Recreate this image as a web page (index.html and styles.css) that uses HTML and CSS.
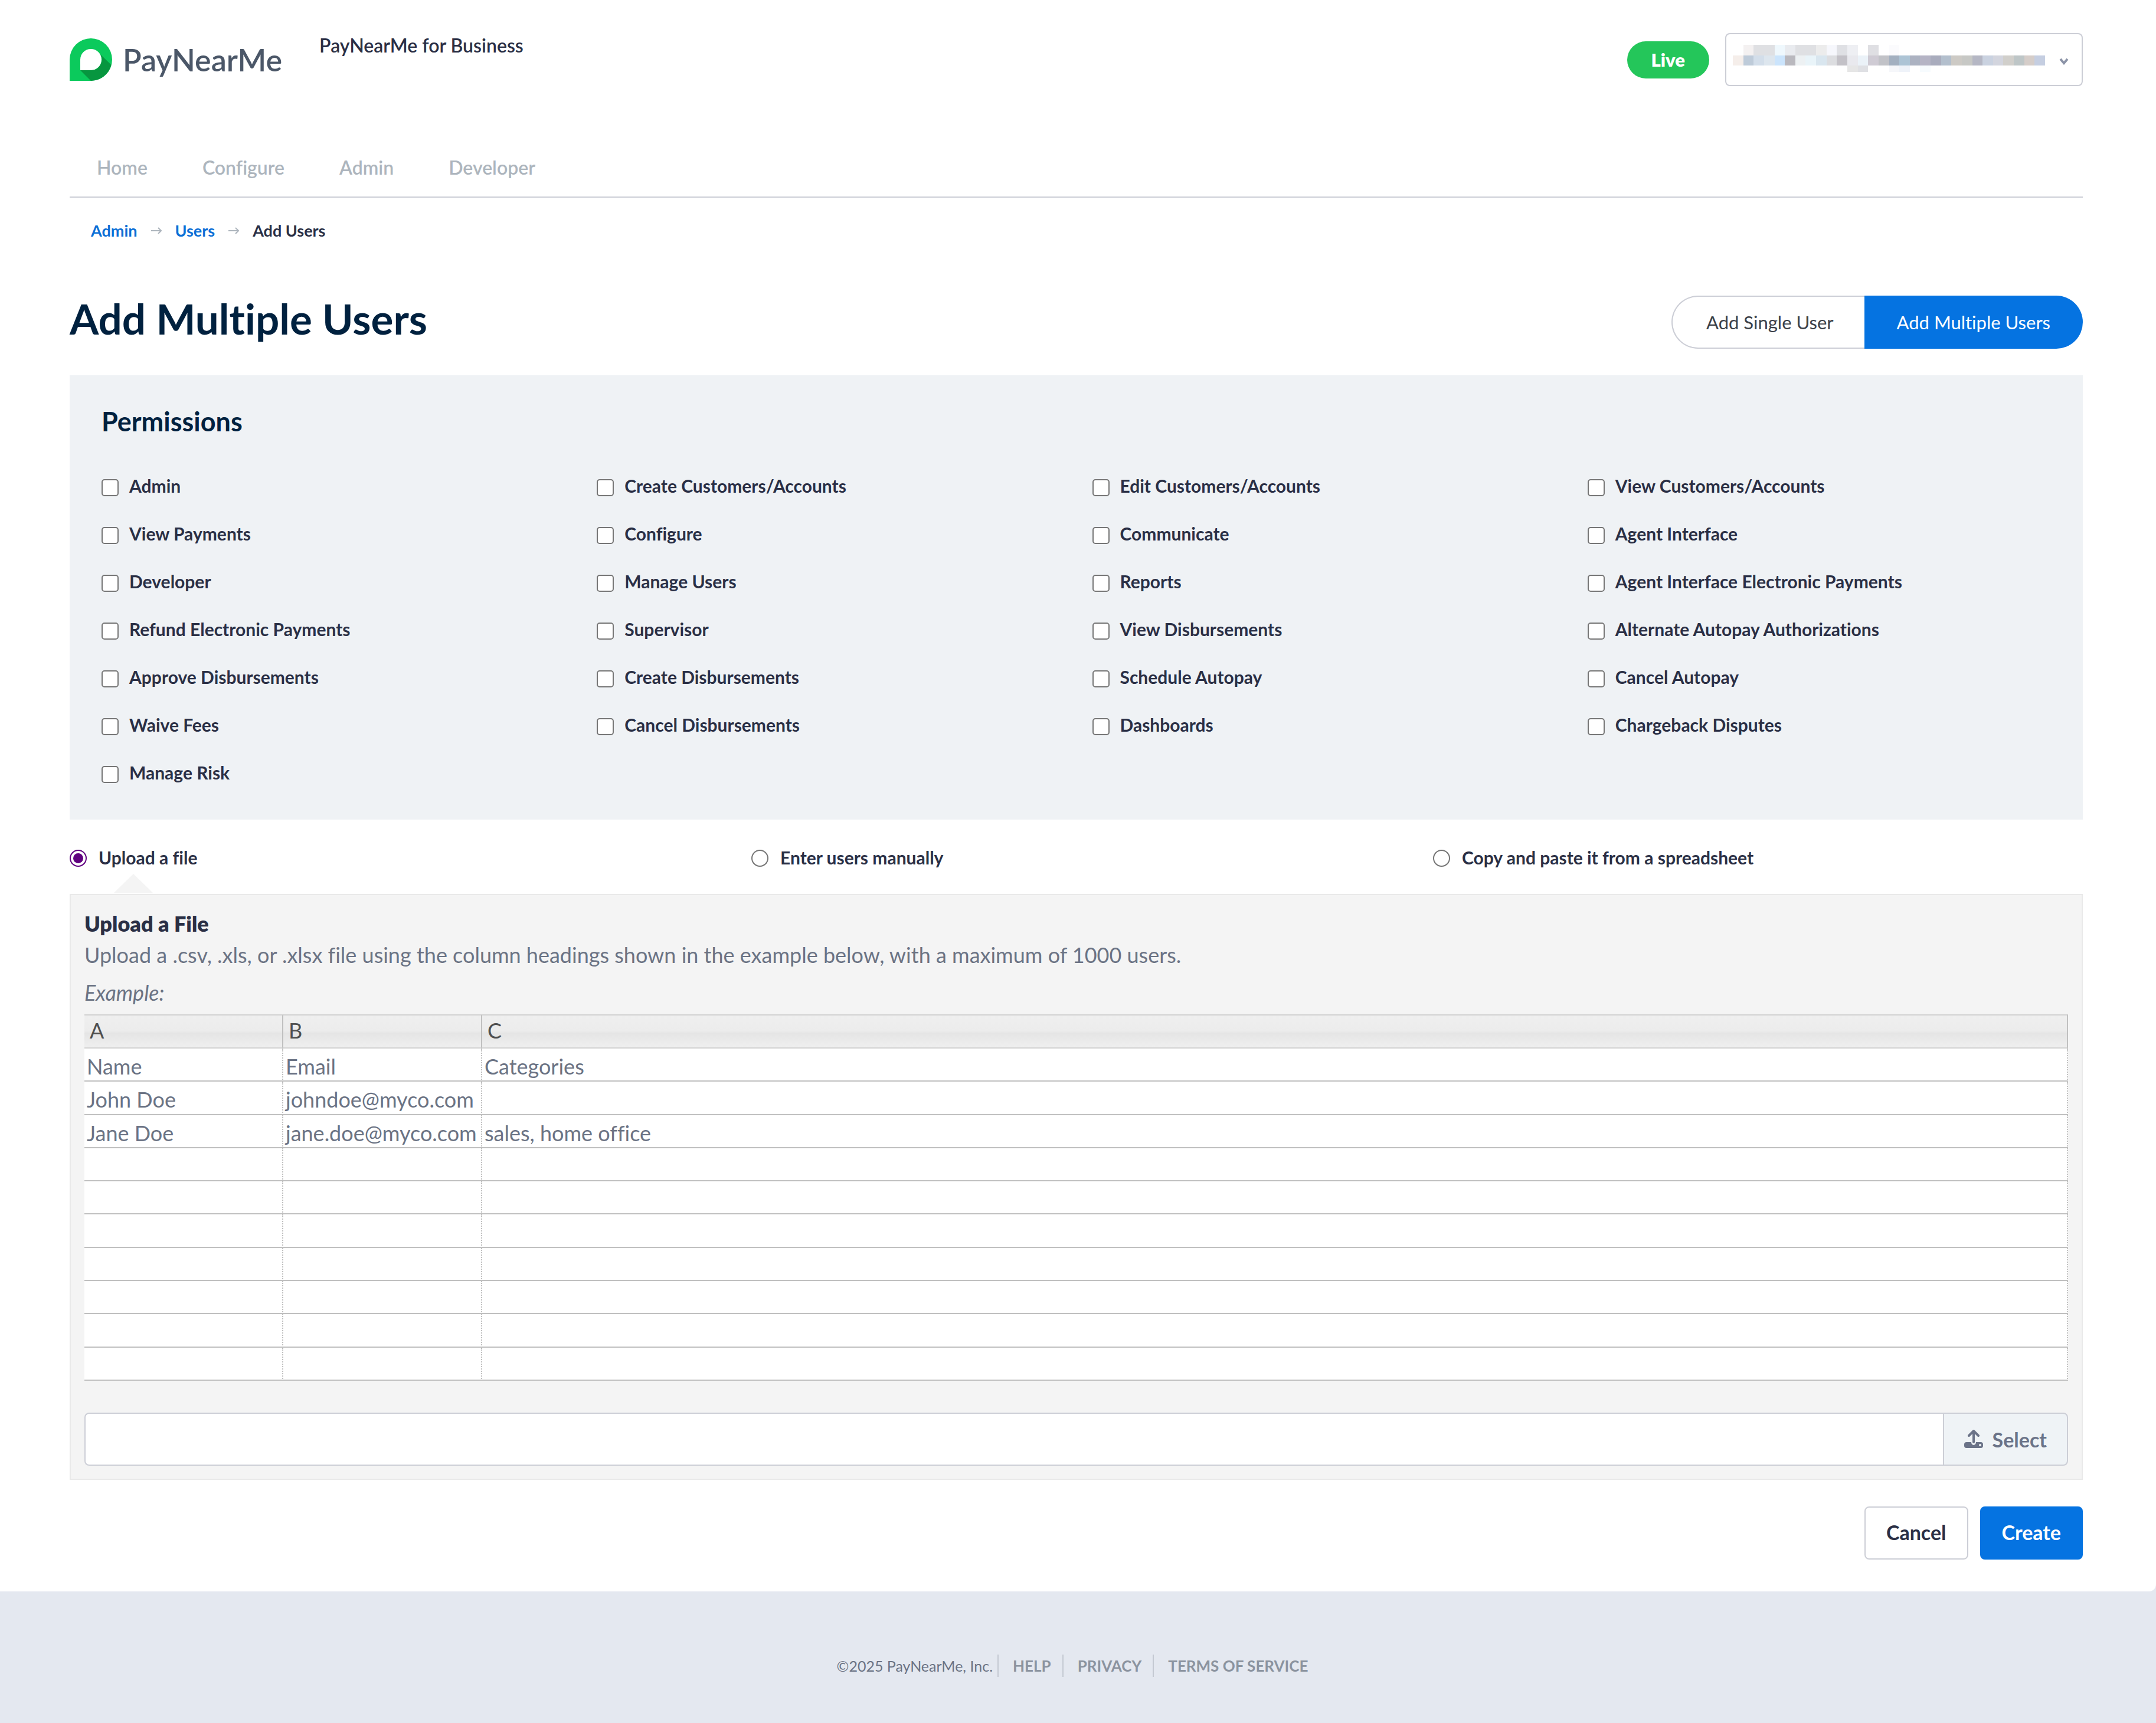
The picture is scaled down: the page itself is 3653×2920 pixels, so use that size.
FILE: index.html
```html
<!DOCTYPE html>
<html lang="en">
<head>
<meta charset="utf-8">
<meta name="viewport" content="width=device-width, initial-scale=1">
<title>Add Multiple Users - PayNearMe for Business</title>
<link rel="stylesheet" href="styles.css">
</head>
<body>
<div class="page">
  <header class="header">
    <a class="logo" href="#">
      <svg class="logo-mark" viewBox="0 0 72 72" aria-hidden="true">
        <path fill="#0bca5c" fill-rule="evenodd" d="M0 72V36a36 36 0 1 1 36 36ZM18 54h18a18 18 0 1 0-18-18Z"/>
        <path fill="#07963f" d="M52 27 70.500 45A36 36 0 0 1 36 72L18 54H36A18 18 0 0 0 52 27Z"/>
      </svg>
      <span class="logo-text">PayNearMe</span>
    </a>
    <p class="product">PayNearMe for Business</p>
    <div class="account">
      <span class="live">Live</span>
      <div class="picker">
        <select class="picker-select" aria-label="Account"><option></option></select>
        <svg class="picker-value" viewBox="0 0 300 46" preserveAspectRatio="none" shape-rendering="crispEdges" aria-hidden="true">
          <g>
            <path fill="#f4f1f1" d="M10 0h10v18h-10z"/><path fill="#dfe0e3" d="M20 0h20v18h-20z"/><path fill="#eff8fd" d="M40 0h10v18h-10z"/><path fill="#e9ebef" d="M50 0h10v18h-10z"/><path fill="#dfe0e3" d="M60 0h20v18h-20z"/><path fill="#ececec" d="M80 0h10v18h-10z"/><path fill="#f6f7fc" d="M90 0h10v18h-10z"/><path fill="#dfe0e4" d="M100 0h10v18h-10z"/><path fill="#eeeff3" d="M110 0h10v18h-10z"/><path fill="#dfdfe3" d="M130 0h10v18h-10z"/><path fill="#fbfbfd" d="M150 0h10v18h-10z"/>
          </g>
          <g>
            <path fill="#f5eeea" d="M0 18h10v17h-10z"/><path fill="#becbd9" d="M10 18h10v17h-10z"/><path fill="#d3deea" d="M20 18h10v17h-10z"/><path fill="#dde6ee" d="M30 18h10v17h-10z"/><path fill="#cbe4fc" d="M40 18h10v17h-10z"/><path fill="#b9b8be" d="M50 18h10v17h-10z"/><path fill="#edf1f3" d="M60 18h10v17h-10z"/><path fill="#e9f4f9" d="M70 18h10v17h-10z"/><path fill="#d9e6ef" d="M80 18h10v17h-10z"/><path fill="#dcdde0" d="M90 18h10v17h-10z"/><path fill="#c3c1c7" d="M100 18h10v17h-10z"/><path fill="#e9e9ee" d="M110 18h10v17h-10z"/><path fill="#ebf2f8" d="M120 18h10v17h-10z"/><path fill="#cfcbd4" d="M130 18h10v17h-10z"/><path fill="#c1c2c7" d="M140 18h10v17h-10z"/>
            <path fill="#a3b0c0" d="M150 18h10v17h-10z"/><path fill="#adc4d5" d="M160 18h10v17h-10z"/><path fill="#acb2c1" d="M170 18h10v17h-10z"/><path fill="#b5b4c5" d="M180 18h10v17h-10z"/><path fill="#a9acbd" d="M190 18h10v17h-10z"/><path fill="#b3bfcd" d="M200 18h10v17h-10z"/><path fill="#cdcac5" d="M210 18h10v17h-10z"/><path fill="#c7c8c5" d="M220 18h10v17h-10z"/><path fill="#b5b7c4" d="M230 18h10v17h-10z"/><path fill="#cad2e0" d="M240 18h10v17h-10z"/><path fill="#d3d5de" d="M250 18h10v17h-10z"/><path fill="#d1cfcb" d="M260 18h10v17h-10z"/><path fill="#bec6c7" d="M270 18h10v17h-10z"/><path fill="#d5cdc9" d="M280 18h10v17h-10z"/><path fill="#c5cee1" d="M290 18h10v17h-10z"/>
          </g>
          <g>
            <path fill="#e6e6e6" d="M110 35h10v11h-10z"/><path fill="#dfe0e4" d="M120 35h10v11h-10z"/><path fill="#f6f7fa" d="M150 35h10v11h-10z"/><path fill="#eff3f9" d="M160 35h10v11h-10z"/><path fill="#f7fbfe" d="M180 35h10v11h-10z"/>
          </g>
        </svg>
        <svg class="picker-arrow" viewBox="0 0 16 12" aria-hidden="true"><path d="M2 2l6 7 6-7" fill="none" stroke="#8b93a7" stroke-width="4"/></svg>
      </div>
    </div>
  </header>

  <nav class="nav" aria-label="Main">
    <a href="#">Home</a>
    <a href="#">Configure</a>
    <a href="#">Admin</a>
    <a href="#">Developer</a>
  </nav>

  <nav class="crumbs" aria-label="Breadcrumb">
    <a href="#">Admin</a>
    <svg class="crumb-arrow" viewBox="0 0 18 12" aria-hidden="true"><path d="M0 6h17M12 1l5 5-5 5" fill="none" stroke="#adb5bd" stroke-width="2"/></svg>
    <a href="#">Users</a>
    <svg class="crumb-arrow" viewBox="0 0 18 12" aria-hidden="true"><path d="M0 6h17M12 1l5 5-5 5" fill="none" stroke="#adb5bd" stroke-width="2"/></svg>
    <span>Add Users</span>
  </nav>

  <main>
    <div class="title-row">
      <h1 class="title">Add Multiple Users</h1>
      <div class="toggle">
        <button class="toggle-option" type="button">Add Single User</button>
        <button class="toggle-option active" type="button">Add Multiple Users</button>
      </div>
    </div>

    <form>
      <section class="permissions">
        <h2 class="permissions-title">Permissions</h2>
        <div class="permissions-grid">
          <label class="choice"><input class="box" type="checkbox">Admin</label>
          <label class="choice"><input class="box" type="checkbox">Create Customers/Accounts</label>
          <label class="choice"><input class="box" type="checkbox">Edit Customers/Accounts</label>
          <label class="choice"><input class="box" type="checkbox">View Customers/Accounts</label>
          <label class="choice"><input class="box" type="checkbox">View Payments</label>
          <label class="choice"><input class="box" type="checkbox">Configure</label>
          <label class="choice"><input class="box" type="checkbox">Communicate</label>
          <label class="choice"><input class="box" type="checkbox">Agent Interface</label>
          <label class="choice"><input class="box" type="checkbox">Developer</label>
          <label class="choice"><input class="box" type="checkbox">Manage Users</label>
          <label class="choice"><input class="box" type="checkbox">Reports</label>
          <label class="choice"><input class="box" type="checkbox">Agent Interface Electronic Payments</label>
          <label class="choice"><input class="box" type="checkbox">Refund Electronic Payments</label>
          <label class="choice"><input class="box" type="checkbox">Supervisor</label>
          <label class="choice"><input class="box" type="checkbox">View Disbursements</label>
          <label class="choice"><input class="box" type="checkbox">Alternate Autopay Authorizations</label>
          <label class="choice"><input class="box" type="checkbox">Approve Disbursements</label>
          <label class="choice"><input class="box" type="checkbox">Create Disbursements</label>
          <label class="choice"><input class="box" type="checkbox">Schedule Autopay</label>
          <label class="choice"><input class="box" type="checkbox">Cancel Autopay</label>
          <label class="choice"><input class="box" type="checkbox">Waive Fees</label>
          <label class="choice"><input class="box" type="checkbox">Cancel Disbursements</label>
          <label class="choice"><input class="box" type="checkbox">Dashboards</label>
          <label class="choice"><input class="box" type="checkbox">Chargeback Disputes</label>
          <label class="choice"><input class="box" type="checkbox">Manage Risk</label>
        </div>
      </section>

      <div class="methods">
        <label class="choice"><input class="radio" type="radio" name="method" checked>Upload a file</label>
        <label class="choice"><input class="radio" type="radio" name="method">Enter users manually</label>
        <label class="choice"><input class="radio" type="radio" name="method">Copy and paste it from a spreadsheet</label>
      </div>

      <section class="upload">
        <h3 class="upload-title">Upload a File</h3>
        <p class="upload-text">Upload a .csv, .xls, or .xlsx file using the column headings shown in the example below, with a maximum of 1000 users.</p>
        <p class="upload-example">Example:</p>
        <table class="sheet">
          <colgroup><col class="narrow"><col class="narrow"><col></colgroup>
          <thead><tr><th scope="col">A</th><th scope="col">B</th><th scope="col">C</th></tr></thead>
          <tbody>
            <tr><td>Name</td><td>Email</td><td>Categories</td></tr>
            <tr><td>John Doe</td><td>johndoe@myco.com</td><td></td></tr>
            <tr><td>Jane Doe</td><td>jane.doe@myco.com</td><td>sales, home office</td></tr>
            <tr><td></td><td></td><td></td></tr>
            <tr><td></td><td></td><td></td></tr>
            <tr><td></td><td></td><td></td></tr>
            <tr><td></td><td></td><td></td></tr>
            <tr><td></td><td></td><td></td></tr>
            <tr><td></td><td></td><td></td></tr>
            <tr><td></td><td></td><td></td></tr>
          </tbody>
        </table>
        <div class="file">
          <input class="file-name" type="text" aria-label="Selected file" readonly>
          <button class="file-select" type="button">
            <svg class="file-icon" viewBox="0 0 32 32" aria-hidden="true">
              <path d="M16 21V3M8 10l8-8 8 8" fill="none" stroke="currentColor" stroke-width="4" stroke-linecap="round" stroke-linejoin="round"/>
              <path fill="currentColor" fill-rule="evenodd" d="M4 21h8a4 5 0 0 0 8 0h8a4 4 0 0 1 4 4v2a4 4 0 0 1-4 4H4a4 4 0 0 1-4-4v-2a4 4 0 0 1 4-4ZM27 24a2 2 0 1 0 0 4 2 2 0 0 0 0-4Z"/>
            </svg>
            Select
          </button>
        </div>
      </section>

      <div class="actions">
        <button class="button" type="button">Cancel</button>
        <button class="button primary" type="submit">Create</button>
      </div>
    </form>
  </main>
</div>

<footer class="footer">
  <span class="copyright">©2025 PayNearMe, Inc.</span>
  <a href="#">HELP</a>
  <a href="#">PRIVACY</a>
  <a href="#">TERMS OF SERVICE</a>
</footer>
</body>
</html>
```
FILE: styles.css
```css
* { box-sizing: border-box; }

body {
  margin: 0;
  background: #e4e8f0;
  color: #2a2f45;
  font-family: Lato, "Liberation Sans", sans-serif;
  font-variant-ligatures: none;
}

h1, h2, h3, p { margin: 0; }
a { text-decoration: none; }
button, input, select { margin: 0; font-family: inherit; font-variant-ligatures: inherit; }

.page {
  padding: 56px 124px 54px 118px;
  background: #fff;
  border-bottom-right-radius: 12px;
}

/* Header */
.header { display: flex; height: 90px; }
.logo { display: flex; align-items: center; gap: 18px; }
.logo-mark { width: 72px; height: 72px; }
.logo-text { color: #4b5768; font-size: 52px; font-weight: 600; line-height: 60px; }
.product { margin-left: 63px; font-size: 32px; font-weight: 600; line-height: 42px; }
.account { display: flex; align-items: center; gap: 27px; margin-left: auto; }
.live {
  padding: 0 41px;
  border-radius: 32px;
  background: #24c65a;
  color: #fff;
  font-size: 31px;
  font-weight: 800;
  line-height: 63px;
}
.picker { position: relative; }
.picker-select {
  display: block;
  width: 606px;
  height: 90px;
  border: 2px solid #ccced6;
  border-radius: 8px;
  background: #fff;
  appearance: none;
}
.picker-value { position: absolute; top: 20px; left: 13px; width: 529px; height: 46px; pointer-events: none; }
.picker-arrow { position: absolute; top: 42px; right: 24px; width: 16px; height: 12px; pointer-events: none; }

/* Navigation */
.nav {
  display: flex;
  gap: 93px;
  margin-top: 118px;
  padding: 0 46px 29px;
  border-bottom: 2px solid #ccced6;
}
.nav a { color: #adb5bd; font-size: 32px; font-weight: 600; line-height: 40px; }
.crumbs {
  display: flex;
  align-items: center;
  gap: 23px;
  margin-top: 40px;
  padding-left: 36px;
  font-size: 27px;
  font-weight: 700;
  line-height: 32px;
}
.crumbs a { color: #0b6fd6; }
.crumb-arrow { width: 18px; height: 12px; }

/* Title */
.title-row { display: flex; justify-content: space-between; align-items: flex-start; margin: 94px 0 45px; }
.title { color: #00213f; font-size: 71px; font-weight: 700; line-height: 78px; }
.toggle { display: flex; }
.toggle-option {
  height: 90px;
  padding: 0 52px 0 57px;
  border: 2px solid #ccced6;
  border-right: 0;
  border-radius: 45px 0 0 45px;
  background: #fff;
  color: #3b4048;
  font-size: 31px;
}
.toggle-option.active {
  padding: 0 55px;
  border: 0;
  border-radius: 0 45px 45px 0;
  background: #0573e1;
  color: #fff;
}

/* Permissions */
.permissions { padding: 51px 54px 60px; background: #eff2f5; }
.permissions-title { color: #00213f; font-size: 45px; font-weight: 700; line-height: 54px; }
.permissions-grid {
  display: grid;
  grid-template-columns: repeat(4, 1fr);
  gap: 41px 54px;
  margin-top: 62px;
}
.choice { display: flex; align-items: center; gap: 18px; font-size: 30px; font-weight: 700; line-height: 40px; }
.box, .radio {
  flex: none;
  width: 29px;
  height: 29px;
  margin-top: 6px;
  border: 2px solid #767676;
  border-radius: 5px;
  background: #fff;
  appearance: none;
}
.radio { margin-top: 3px; padding: 4px; border-radius: 50%; }
.radio:checked { border-color: #600080; background: #600080 content-box; }

/* Upload method */
.methods { display: grid; grid-template-columns: repeat(3, 1fr); gap: 54px; margin: 44px 0 42px; }
.methods .choice { gap: 20px; }
.upload {
  position: relative;
  padding: 23px 23px 22px;
  border: 2px solid #e9e9e9;
  background: #f4f4f4;
}
.upload::before {
  content: "";
  position: absolute;
  bottom: 100%;
  left: 72px;
  margin-bottom: 3px;
  border: solid transparent;
  border-width: 0 34px 33px;
  border-bottom-color: #f4f4f4;
}
.upload-title { font-size: 36px; font-weight: 800; line-height: 50px; }
.upload-text, .upload-example { color: #6b7384; font-size: 36px; line-height: 56px; }
.upload-example { margin: 8px 0 9px; font-style: italic; }

.sheet {
  width: 100%;
  height: 621px;
  border-spacing: 0;
  table-layout: fixed;
  color: #6b7384;
  font-size: 36px;
  line-height: 44px;
}
.narrow { width: 337px; }
.sheet th {
  height: 58px;
  padding: 0 0 4px 9px;
  border: solid #d2d2d2;
  border-width: 2px 0;
  border-right: 2px solid #c0c0c0;
  background: linear-gradient(#efefef, #ececec 48%, #e5e5e5 56%, #efefef);
  color: #4f4f4f;
  font-weight: 400;
  text-align: left;
}
.sheet td {
  height: 56px;
  padding: 6px 0 0 4px;
  border-right: 2px dotted #c0c0c0;
  border-bottom: 2px solid #c0c0c0;
  background: #fff;
  white-space: nowrap;
}

.file { display: flex; height: 90px; margin-top: 54px; }
.file-name {
  flex: 1;
  padding: 0 24px;
  border: 2px solid #ccced6;
  border-right: 0;
  border-radius: 8px 0 0 8px;
  background: #fff;
  font-size: 34px;
}
.file-select {
  display: flex;
  align-items: center;
  gap: 16px;
  padding: 0 34px;
  border: 2px solid #ccced6;
  border-radius: 0 8px 8px 0;
  background: #eff3f6;
  color: #6b7388;
  font-size: 34px;
  font-weight: 700;
}
.file-icon { width: 32px; height: 32px; }

/* Actions */
.actions { display: flex; justify-content: flex-end; gap: 20px; margin-top: 45px; }
.button {
  height: 90px;
  padding: 0 35px 3px;
  border: 2px solid #ccced6;
  border-radius: 8px;
  background: #fff;
  color: #2a2f45;
  font-size: 34px;
  font-weight: 700;
}
.button.primary { border-color: #0573e1; background: #0573e1; color: #fff; }

/* Footer */
.footer {
  display: flex;
  justify-content: center;
  padding: 107px 0 76px;
  color: #6b7384;
  font-size: 25px;
  line-height: 38px;
}
.copyright { padding-right: 8px; }
.footer a {
  padding: 0 19px 0 24px;
  border-left: 2px solid #c4c9d2;
  color: #8b939f;
  font-size: 26px;
  font-weight: 700;
}
```
